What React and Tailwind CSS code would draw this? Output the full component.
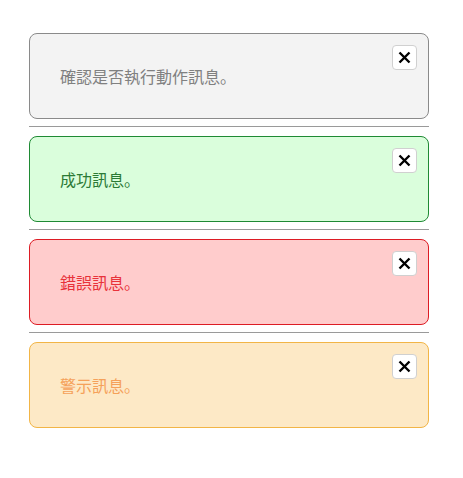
import React from "react";

const items = [
  { text: "確認是否執行動作訊息。", box: "bg-[#f3f3f3] border-[#8a8a8a]", txt: "text-[#808080]" },
  { text: "成功訊息。", box: "bg-[#dafedc] border-[#1f8a34]", txt: "text-[#2b7a36]" },
  { text: "錯誤訊息。", box: "bg-[#ffcccc] border-[#dd1c24]", txt: "text-[#e8323a]" },
  { text: "警示訊息。", box: "bg-[#fde9c6] border-[#f2b546]", txt: "text-[#f5a15a]" },
];

function Close() {
  return (
    <button className="absolute right-[11px] top-[11px] w-[25px] h-[25px] flex items-center justify-center bg-white border border-[#d0d0d0] rounded-[4px]">
      <svg width="13" height="13" viewBox="0 0 13 13">
        <path d="M1.5 1.5 L11.5 11.5 M11.5 1.5 L1.5 11.5" stroke="#000" strokeWidth="2.4" strokeLinecap="butt" />
      </svg>
    </button>
  );
}

export default function App() {
  return (
    <div className="w-[463px] h-[478px] bg-white pt-[33px] pl-[29px]" style={{ fontFamily: '"Noto Sans CJK JP", "Noto Sans", sans-serif' }}>
      <div className="w-[400px] flex flex-col">
        {items.map((it, i) => (
          <React.Fragment key={i}>
            <div className={`relative h-[86px] border rounded-[8px] flex items-center pl-[30px] ${it.box}`}>
              <span className={`text-[16px] leading-none ${it.txt}`}>{it.text}</span>
              <Close />
            </div>
            {i < items.length - 1 && <div className="h-px bg-[#9a9a9a] mt-[7px] mb-[9px]" />}
          </React.Fragment>
        ))}
      </div>
    </div>
  );
}
